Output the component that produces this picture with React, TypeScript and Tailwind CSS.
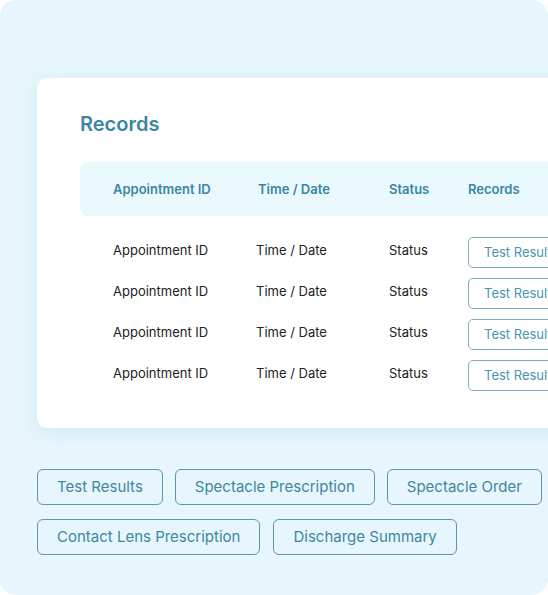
const rows = [0, 1, 2, 3];

function DocButton({ label }: { label: string }) {
  return (
    <button className="h-[36px] shrink-0 whitespace-nowrap rounded-[6px] border border-[#5a97ae] px-[19px] text-[15px] text-[#3f86a1]">
      {label}
    </button>
  );
}

export default function App() {
  return (
    <div
      className="h-[595px] w-[548px] overflow-hidden rounded-[16px] bg-[#e6f6fc]"
      style={{ fontFamily: "Inter, 'Noto Sans', sans-serif" }}
    >
      <div className="pl-[37px] pt-[78px]">
        {/* records card, runs past the right edge */}
        <div className="h-[350px] w-[600px] rounded-[10px] bg-white pl-[43px] pt-[34px] shadow-[0_4px_18px_rgba(120,180,215,0.18)]">
          <h2 className="text-[20px] font-semibold leading-[24px] text-[#3b86a2]">Records</h2>

          <div className="mt-[26px] flex h-[54px] items-center rounded-[8px] bg-[#e9f9fe] pl-[33px] pt-[2px] text-[13px] font-semibold text-[#3b86a2]">
            <span className="w-[145px]">Appointment ID</span>
            <span className="w-[131px]">Time / Date</span>
            <span className="w-[79px]">Status</span>
            <span>Records</span>
          </div>

          <div className="mt-[21px] flex flex-col gap-[10px]">
            {rows.map((r) => (
              <div key={r} className="flex h-[31px] items-center pl-[33px] text-[13px] text-[#222]">
                <span className="w-[143px] pb-[4px]">Appointment ID</span>
                <span className="w-[133px] pb-[4px]">Time / Date</span>
                <span className="w-[79px] pb-[4px]">Status</span>
                <button className="h-[31px] whitespace-nowrap rounded-[5px] border border-[#79adc1] px-[15px] text-[13px] text-[#4a95b0]">
                  Test Results
                </button>
              </div>
            ))}
          </div>
        </div>

        <div className="mt-[41px] flex flex-col gap-[14px]">
          <div className="flex gap-[12px]">
            <DocButton label="Test Results" />
            <DocButton label="Spectacle Prescription" />
            <DocButton label="Spectacle Order" />
          </div>
          <div className="flex gap-[13px]">
            <DocButton label="Contact Lens Prescription" />
            <DocButton label="Discharge Summary" />
          </div>
        </div>
      </div>
    </div>
  );
}
